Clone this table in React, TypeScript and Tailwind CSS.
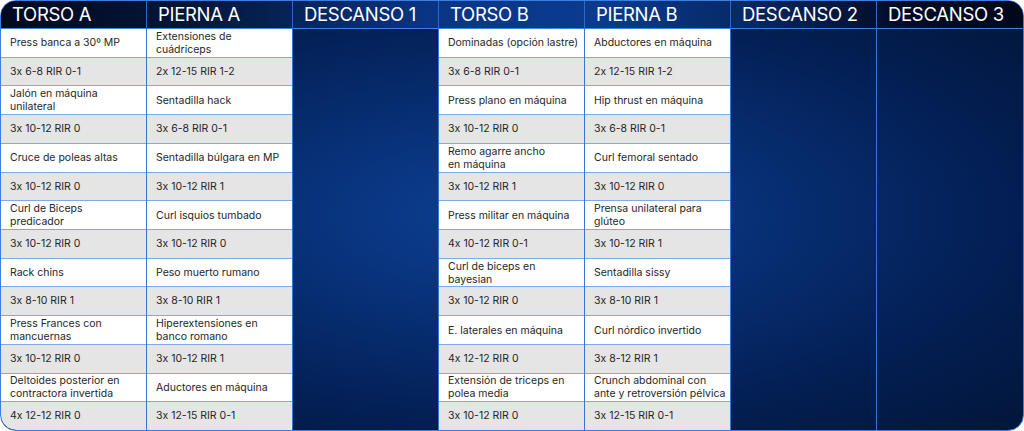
import React from "react";

type Item = { name: string[]; sets: string };

const days: { title: string; items?: Item[] }[] = [
  {
    title: "TORSO A",
    items: [
      { name: ["Press banca a 30º MP"], sets: "3x 6-8 RIR 0-1" },
      { name: ["Jalón en máquina", "unilateral"], sets: "3x 10-12 RIR 0" },
      { name: ["Cruce de poleas altas"], sets: "3x 10-12 RIR 0" },
      { name: ["Curl de Biceps", "predicador"], sets: "3x 10-12 RIR 0" },
      { name: ["Rack chins"], sets: "3x 8-10 RIR 1" },
      { name: ["Press Frances con", "mancuernas"], sets: "3x 10-12 RIR 0" },
      { name: ["Deltoides posterior en", "contractora invertida"], sets: "4x 12-12 RIR 0" },
    ],
  },
  {
    title: "PIERNA A",
    items: [
      { name: ["Extensiones de", "cuádriceps"], sets: "2x 12-15 RIR 1-2" },
      { name: ["Sentadilla hack"], sets: "3x 6-8 RIR 0-1" },
      { name: ["Sentadilla búlgara en MP"], sets: "3x 10-12 RIR 1" },
      { name: ["Curl isquios tumbado"], sets: "3x 10-12 RIR 0" },
      { name: ["Peso muerto rumano"], sets: "3x 8-10 RIR 1" },
      { name: ["Hiperextensiones en", "banco romano"], sets: "3x 10-12 RIR 1" },
      { name: ["Aductores en máquina"], sets: "3x 12-15 RIR 0-1" },
    ],
  },
  { title: "DESCANSO 1" },
  {
    title: "TORSO B",
    items: [
      { name: ["Dominadas (opción lastre)"], sets: "3x 6-8 RIR 0-1" },
      { name: ["Press plano en máquina"], sets: "3x 10-12 RIR 0" },
      { name: ["Remo agarre ancho", "en máquina"], sets: "3x 10-12 RIR 1" },
      { name: ["Press militar en máquina"], sets: "4x 10-12 RIR 0-1" },
      { name: ["Curl de biceps en", "bayesian"], sets: "3x 10-12 RIR 0" },
      { name: ["E. laterales en máquina"], sets: "4x 12-12 RIR 0" },
      { name: ["Extensión de triceps en", "polea media"], sets: "3x 10-12 RIR 0" },
    ],
  },
  {
    title: "PIERNA B",
    items: [
      { name: ["Abductores en máquina"], sets: "2x 12-15 RIR 1-2" },
      { name: ["Hip thrust en máquina"], sets: "3x 6-8 RIR 0-1" },
      { name: ["Curl femoral sentado"], sets: "3x 10-12 RIR 0" },
      { name: ["Prensa unilateral para", "glúteo"], sets: "3x 10-12 RIR 1" },
      { name: ["Sentadilla sissy"], sets: "3x 8-10 RIR 1" },
      { name: ["Curl nórdico invertido"], sets: "3x 8-12 RIR 1" },
      { name: ["Crunch abdominal con", "ante y retroversión pélvica"], sets: "3x 12-15 RIR 0-1" },
    ],
  },
  { title: "DESCANSO 2" },
  { title: "DESCANSO 3" },
];

const App = () => {
  return (
    <div
      className="w-[1024px] h-[431px] bg-white [font-feature-settings:'calt'_0]"
      style={{ fontFamily: "Inter, 'Noto Sans', sans-serif" }}
    >
      <div className="w-full h-full rounded-[16px] border border-[#3d7fe0] overflow-hidden flex flex-col bg-[radial-gradient(ellipse_at_50%_50%,#0d4096_0%,#072f74_35%,#031e52_70%,#021639_100%)]">
        {/* header */}
        <div className="h-[28px] shrink-0 grid grid-cols-7 border-b border-[#3f7fe0] bg-[linear-gradient(to_right,#010920_0%,#031638_18%,#0a3582_42%,#0b3b8f_58%,#072a68_72%,#020c26_88%,#01081c_100%)]">
          {days.map((d, i) => (
            <div
              key={d.title}
              className={`flex items-center pl-[11px] text-white text-[18.5px] tracking-[-0.3px] ${i < 6 ? "border-r border-[#2f68c8]" : ""}`}
            >
              {d.title}
            </div>
          ))}
        </div>

        {/* body */}
        <div className="flex-1 grid grid-cols-7">
          {days.map((d, i) => (
            <div key={d.title} className={`flex flex-col ${i < 6 ? "border-r border-[#3a74d4]" : ""}`}>
              {d.items &&
                d.items.flatMap((it, j) => [
                  <div
                    key={`n${j}`}
                    className="flex-1 flex flex-col justify-center bg-white border-b border-[#7eaaeb] pl-[9px] text-[10.5px] leading-[13px] text-[#262626]"
                  >
                    {it.name.map((l) => (
                      <span key={l}>{l}</span>
                    ))}
                  </div>,
                  <div
                    key={`s${j}`}
                    className={`flex-1 flex items-center bg-[#e5e5e6] pl-[9px] text-[10.5px] text-[#262626] ${j < 6 ? "border-b border-[#7eaaeb]" : ""} ${i === 0 && j === 6 ? "rounded-bl-[15px]" : ""}`}
                  >
                    {it.sets}
                  </div>,
                ])}
            </div>
          ))}
        </div>
      </div>
    </div>
  );
};

export default App;
